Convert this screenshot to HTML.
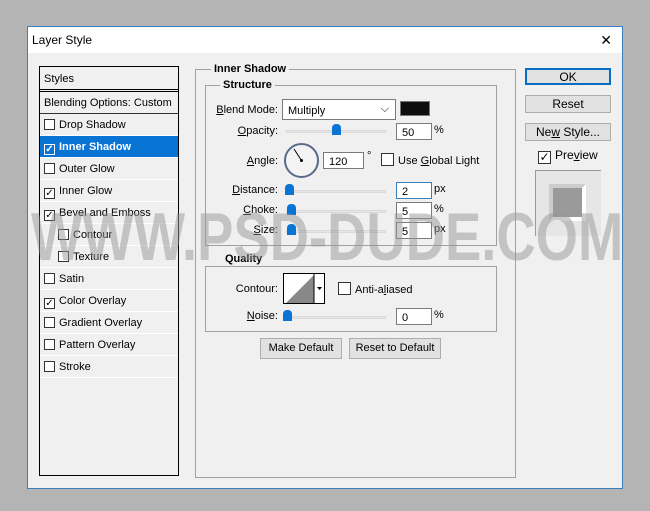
<!DOCTYPE html><html><head><style>
*{box-sizing:border-box;margin:0;padding:0}
body{width:650px;height:511px;background:#b4b4b4;position:relative;overflow:hidden;font-family:"Liberation Sans",sans-serif;font-size:11px;color:#000}
.a{position:absolute}
#dlg{left:27px;top:26px;width:596px;height:463px;background:#f0f0f0;border:1px solid #3c7fc0;overflow:hidden}
#title{left:0;top:0;width:594px;height:26px;background:#fff;font-size:12px;padding:6px 0 0 4px}
.list{left:11px;top:39px;width:140px;height:410px;border:1px solid #000;background:#f0f0f0}
.row{position:absolute;left:0;width:138px;height:22px;border-bottom:1px solid #fff;padding:5px 0 0 4px;white-space:nowrap}
.cb{display:inline-block;width:11px;height:11px;border:1px solid #333;background:#fff;vertical-align:-2px;margin-right:4px;position:relative;font-size:10px;line-height:9px;text-align:center}
.sel{background:#0a74d4;color:#fff;font-weight:bold}
.fs{border:1px solid #a0a0a0}
.leg{position:absolute;background:#f0f0f0;font-weight:bold;padding:0 3px}
.in{position:absolute;background:#fff;border:1px solid #7a7a7a;height:17px;padding:3px 0 0 5px}
.trk{position:absolute;height:3px;background:#e6e6e6;border:1px solid #dadada}
.th{position:absolute;width:9px;height:11px;background:#0a74d4;border-radius:4px 4px 0 0}
.lb{position:absolute;text-align:right;width:80px}
.btn{position:absolute;background:#e1e1e1;border:1px solid #adadad;text-align:center;font-size:12px}
u{text-decoration:underline}
</style></head><body>
<div id="dlg" class="a">
<div id="title" class="a">Layer Style</div>
<div class="a" style="right:10px;top:5px;font-size:14px">✕</div>
<div class="a list">
<div class="row" style="top:0;height:25px;border-bottom:3px double #000;padding-top:6px">Styles</div>
<div class="row" style="top:25px;border-bottom:1px solid #333;padding-top:5px">Blending Options: Custom</div>
<div class="row" style="top:47px"><span class="cb"></span>Drop Shadow</div>
<div class="row sel" style="top:69px"><span class="cb" style="border-color:#fff;background:#0a74d4;color:#fff">✓</span>Inner Shadow</div>
<div class="row" style="top:91px"><span class="cb"></span>Outer Glow</div>
<div class="row" style="top:113px"><span class="cb">✓</span>Inner Glow</div>
<div class="row" style="top:135px"><span class="cb">✓</span>Bevel and Emboss</div>
<div class="row" style="top:157px;padding-left:18px"><span class="cb"></span>Contour</div>
<div class="row" style="top:179px;padding-left:18px"><span class="cb"></span>Texture</div>
<div class="row" style="top:201px"><span class="cb"></span>Satin</div>
<div class="row" style="top:223px"><span class="cb">✓</span>Color Overlay</div>
<div class="row" style="top:245px"><span class="cb"></span>Gradient Overlay</div>
<div class="row" style="top:267px"><span class="cb"></span>Pattern Overlay</div>
<div class="row" style="top:289px"><span class="cb"></span>Stroke</div>
</div>
<div class="a fs" style="left:167px;top:42px;width:321px;height:409px"></div>
<div class="leg" style="left:183px;top:36px">Inner Shadow</div>
<div class="a fs" style="left:177px;top:58px;width:292px;height:161px"></div>
<div class="leg" style="left:192px;top:52px">Structure</div>
<div class="lb" style="left:170px;top:77px"><u>B</u>lend Mode:</div>
<div class="in" style="left:254px;top:72px;width:114px;height:21px;padding-top:5px">Multiply<span style="position:absolute;right:6px;top:3px">⌵</span></div>
<div class="a" style="left:372px;top:74px;width:30px;height:15px;background:#0d0d0d;border:1px solid #777"></div>
<div class="lb" style="left:170px;top:98px"><u>O</u>pacity:</div>
<div class="trk" style="left:258px;top:103px;width:100px"></div><div class="th" style="left:304px;top:97px"></div>
<div class="in" style="left:368px;top:96px;width:36px">50</div><div class="a" style="left:406px;top:97px">%</div>
<div class="lb" style="left:170px;top:128px"><u>A</u>ngle:</div>
<div class="a" style="left:256px;top:116px;width:35px;height:35px;border-radius:50%;border:2px solid #5a6a8a;background:#f3f3f3"></div>
<svg class="a" style="left:256px;top:116px" width="35" height="35"><line x1="17.5" y1="17.5" x2="10" y2="6" stroke="#000" stroke-width="1"/><circle cx="17.5" cy="17.5" r="1.5"/></svg>
<div class="in" style="left:295px;top:125px;width:41px">120</div><div class="a" style="left:339px;top:123px">°</div>
<div class="a" style="left:353px;top:126px"><span class="cb" style="width:13px;height:13px"></span>Use <u>G</u>lobal Light</div>
<div class="lb" style="left:170px;top:157px"><u>D</u>istance:</div>
<div class="trk" style="left:258px;top:163px;width:100px"></div><div class="th" style="left:257px;top:157px"></div>
<div class="in" style="left:368px;top:155px;width:36px;border-color:#3c7fc0">2</div><div class="a" style="left:406px;top:156px">px</div>
<div class="lb" style="left:170px;top:177px"><u>C</u>hoke:</div>
<div class="trk" style="left:258px;top:183px;width:100px"></div><div class="th" style="left:259px;top:177px"></div>
<div class="in" style="left:368px;top:175px;width:36px">5</div><div class="a" style="left:406px;top:176px">%</div>
<div class="lb" style="left:170px;top:197px"><u>S</u>ize:</div>
<div class="trk" style="left:258px;top:203px;width:100px"></div><div class="th" style="left:259px;top:197px"></div>
<div class="in" style="left:368px;top:195px;width:36px">5</div><div class="a" style="left:406px;top:196px">px</div>
<div class="a fs" style="left:177px;top:239px;width:292px;height:66px"></div>
<div class="leg" style="left:194px;top:226px">Quality</div>
<div class="lb" style="left:170px;top:256px">Contour:</div>
<div class="a" style="left:255px;top:246px;width:42px;height:31px;border:1px solid #000;background:#fff"></div>
<svg class="a" style="left:256px;top:247px" width="40" height="29"><polygon points="2,29 30,1 30,29" fill="#888"/><line x1="30" y1="0" x2="30" y2="29" stroke="#000"/><polygon points="33,13 38,13 35.5,16" fill="#000"/></svg>
<div class="a" style="left:310px;top:255px"><span class="cb" style="width:13px;height:13px"></span>Anti-a<u>l</u>iased</div>
<div class="lb" style="left:170px;top:283px"><u>N</u>oise:</div>
<div class="trk" style="left:258px;top:289px;width:100px"></div><div class="th" style="left:255px;top:283px"></div>
<div class="in" style="left:368px;top:281px;width:36px">0</div><div class="a" style="left:406px;top:282px">%</div>
<div class="btn" style="left:232px;top:311px;width:82px;height:21px;padding-top:3px;font-size:11px">Make Default</div>
<div class="btn" style="left:321px;top:311px;width:92px;height:21px;padding-top:3px;font-size:11px">Reset to Default</div>
<div class="btn" style="left:497px;top:41px;width:86px;height:17px;border:2px solid #0a6cc4;padding-top:0">OK</div>
<div class="btn" style="left:497px;top:68px;width:86px;height:18px;padding-top:1px">Reset</div>
<div class="btn" style="left:497px;top:96px;width:86px;height:18px;padding-top:1px">Ne<u>w</u> Style...</div>
<div class="a" style="left:510px;top:121px;font-size:12px"><span class="cb" style="width:13px;height:13px;font-size:12px;line-height:11px">✓</span>Pre<u>v</u>iew</div>
<div class="a" style="left:507px;top:143px;width:66px;height:66px;background:#e6e6e6;border-top:1px solid #999;border-left:1px solid #999"></div>
<div class="a" style="left:521px;top:157px;width:37px;height:37px;background:#9a9a9a;border:4px solid #fff;border-top-color:#ccc;border-left-color:#ccc"></div>
<div class="a" style="left:3px;top:176px;font-size:68px;line-height:1;font-weight:bold;color:rgba(150,150,150,0.5);white-space:nowrap;transform:scaleX(0.8);transform-origin:0 0">WWW.PSD-DUDE.COM</div>
</div>
</body></html>
